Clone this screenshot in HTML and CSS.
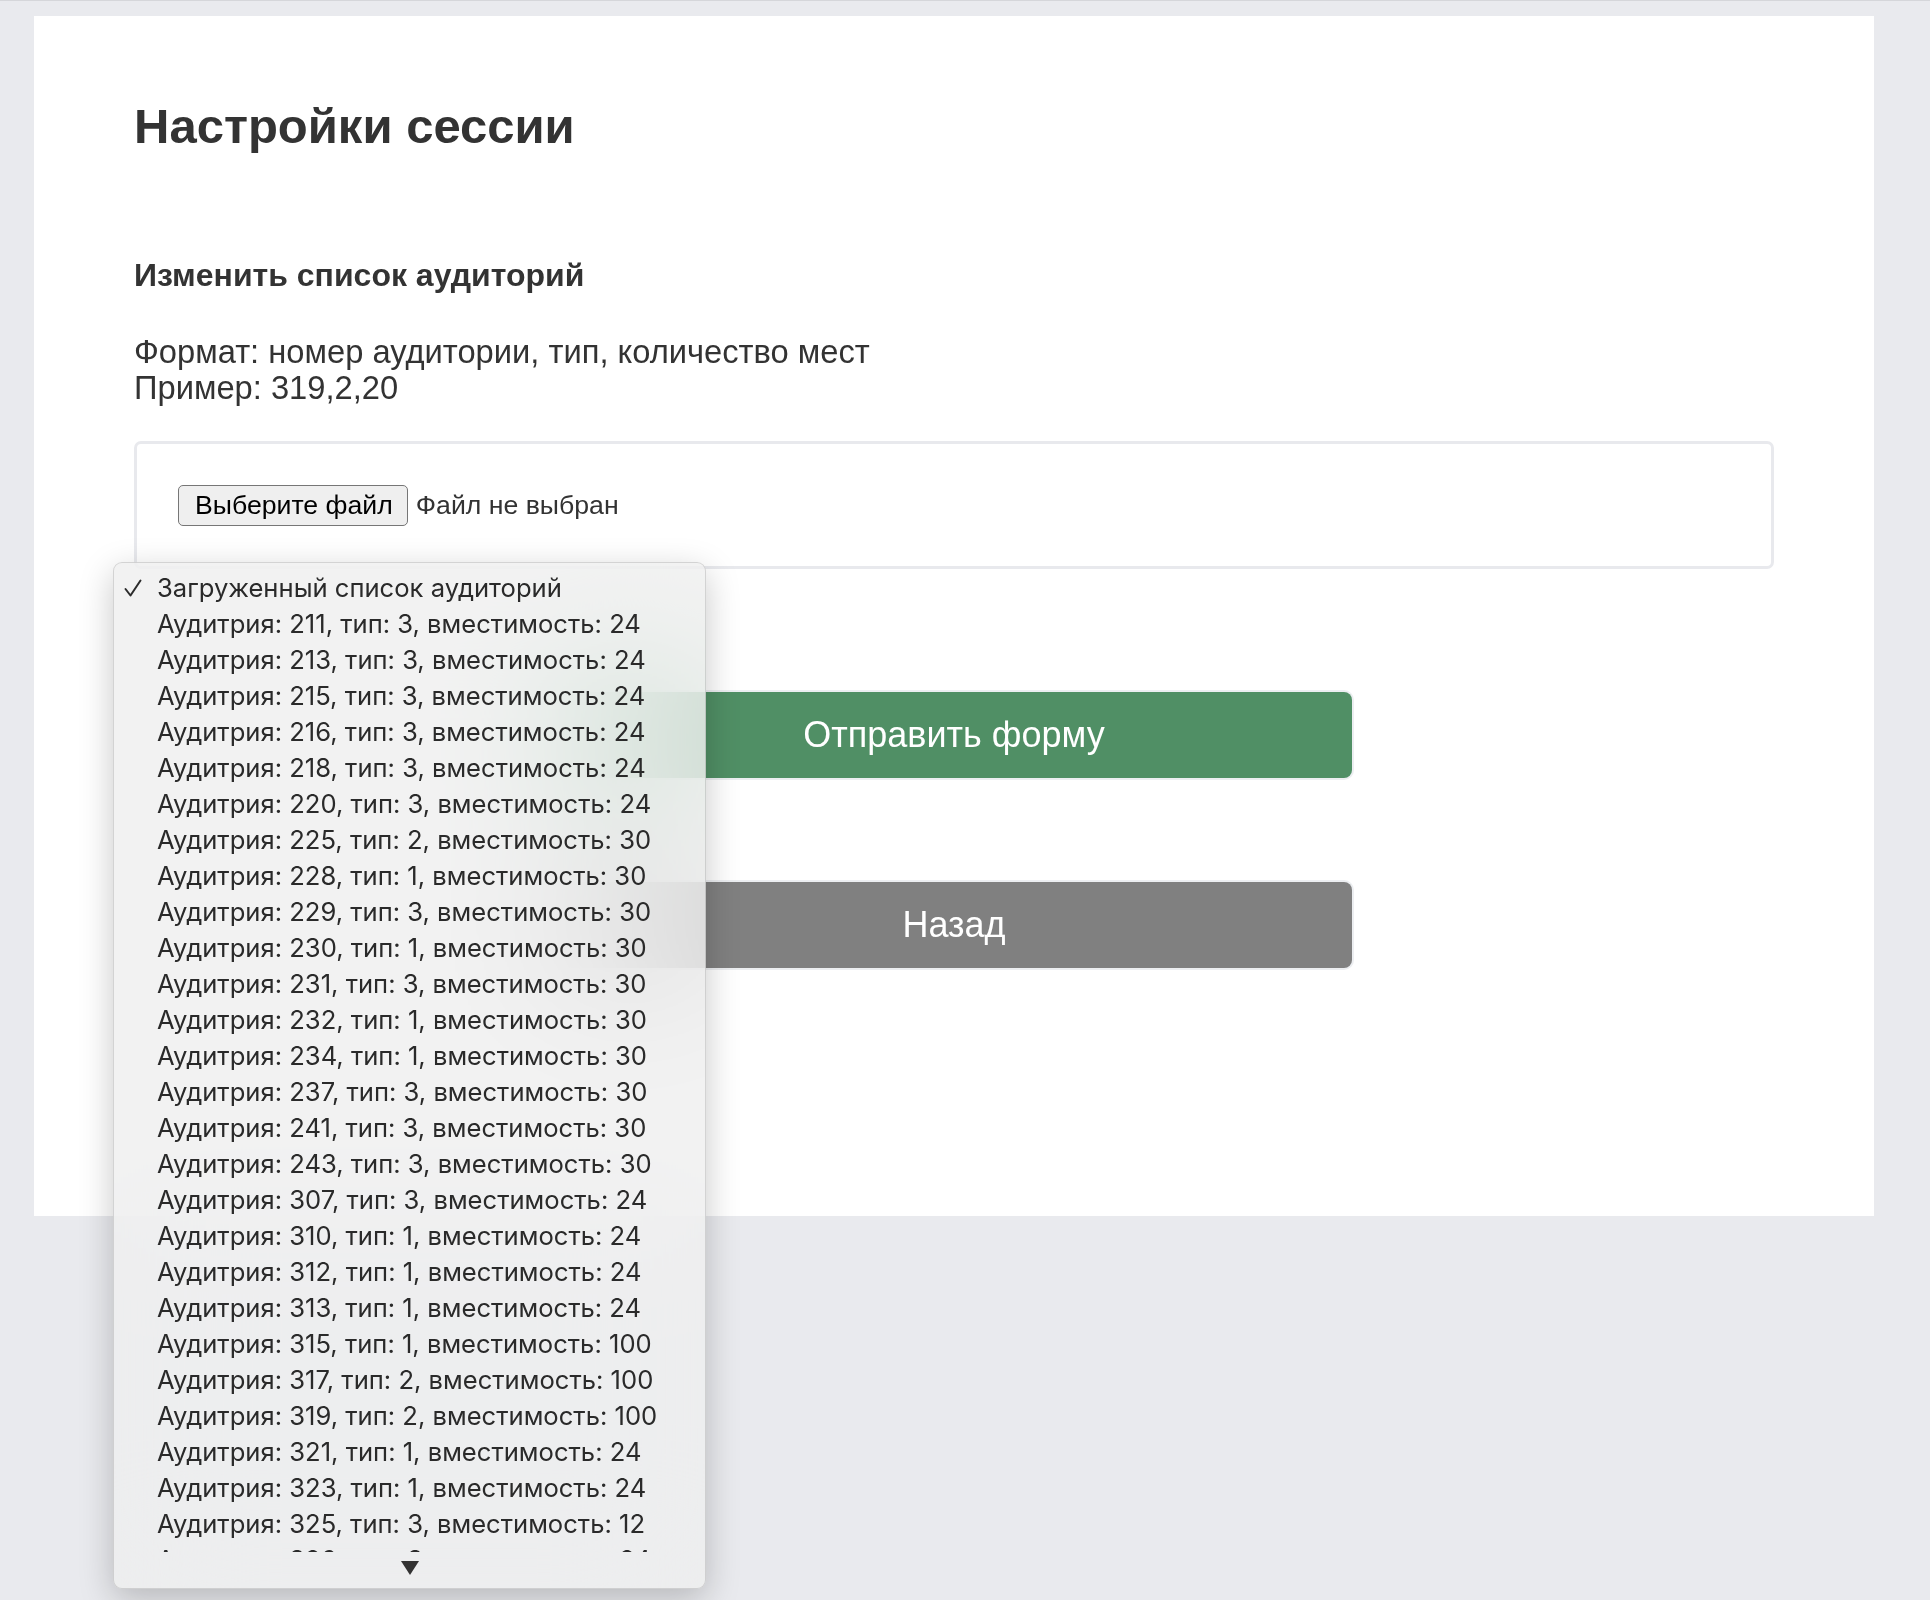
FILE: index.html
```html
<!DOCTYPE html>
<html lang="ru">
<head>
<meta charset="utf-8">
<title>Настройки сессии</title>
<link rel="stylesheet" href="styles.css">
</head>
<body>
<main class="card">
  <h1 class="title">Настройки сессии</h1>
  <h3 class="subtitle">Изменить список аудиторий</h3>
  <p class="hint">Формат: номер аудитории, тип, количество мест<br>Пример: 319,2,20</p>
  <div class="upload">
    <button type="button" class="file-btn">Выберите файл</button>
    <span class="file-name">Файл не выбран</span>
  </div>
  <div class="actions">
    <button type="button" class="btn btn-submit">Отправить форму</button>
    <button type="button" class="btn btn-back">Назад</button>
  </div>
</main>

<div class="popup">
  <ul class="popup-list">
    <li class="opt checked"><svg class="check" width="20" height="20" viewBox="0 0 20 20" aria-hidden="true"><path d="M2.5 11 L7.5 17.5 L17.5 2.5" fill="none" stroke="#2c2c2c" stroke-width="2" stroke-linecap="round" stroke-linejoin="round"/></svg>Загруженный список аудиторий</li>
    <li class="opt">Аудитрия: 211, тип: 3, вместимость: 24</li>
    <li class="opt">Аудитрия: 213, тип: 3, вместимость: 24</li>
    <li class="opt">Аудитрия: 215, тип: 3, вместимость: 24</li>
    <li class="opt">Аудитрия: 216, тип: 3, вместимость: 24</li>
    <li class="opt">Аудитрия: 218, тип: 3, вместимость: 24</li>
    <li class="opt">Аудитрия: 220, тип: 3, вместимость: 24</li>
    <li class="opt">Аудитрия: 225, тип: 2, вместимость: 30</li>
    <li class="opt">Аудитрия: 228, тип: 1, вместимость: 30</li>
    <li class="opt">Аудитрия: 229, тип: 3, вместимость: 30</li>
    <li class="opt">Аудитрия: 230, тип: 1, вместимость: 30</li>
    <li class="opt">Аудитрия: 231, тип: 3, вместимость: 30</li>
    <li class="opt">Аудитрия: 232, тип: 1, вместимость: 30</li>
    <li class="opt">Аудитрия: 234, тип: 1, вместимость: 30</li>
    <li class="opt">Аудитрия: 237, тип: 3, вместимость: 30</li>
    <li class="opt">Аудитрия: 241, тип: 3, вместимость: 30</li>
    <li class="opt">Аудитрия: 243, тип: 3, вместимость: 30</li>
    <li class="opt">Аудитрия: 307, тип: 3, вместимость: 24</li>
    <li class="opt">Аудитрия: 310, тип: 1, вместимость: 24</li>
    <li class="opt">Аудитрия: 312, тип: 1, вместимость: 24</li>
    <li class="opt">Аудитрия: 313, тип: 1, вместимость: 24</li>
    <li class="opt">Аудитрия: 315, тип: 1, вместимость: 100</li>
    <li class="opt">Аудитрия: 317, тип: 2, вместимость: 100</li>
    <li class="opt">Аудитрия: 319, тип: 2, вместимость: 100</li>
    <li class="opt">Аудитрия: 321, тип: 1, вместимость: 24</li>
    <li class="opt">Аудитрия: 323, тип: 1, вместимость: 24</li>
    <li class="opt">Аудитрия: 325, тип: 3, вместимость: 12</li>
    <li class="opt">Аудитрия: 326, тип: 3, вместимость: 24</li>
  </ul>
  <div class="popup-more">
    <svg width="20" height="16" viewBox="0 0 20 16" aria-hidden="true"><path d="M1 1 H19 L10 15 Z" fill="#333"/></svg>
  </div>
</div>
</body>
</html>
```

FILE: styles.css
```css
html, body {
  margin: 0;
  padding: 0;
}

body {
  background: #e9eaee;
  border-top: 1px solid #d5d6da;
  min-height: 1599px;
  font-family: "Liberation Sans", Arial, sans-serif;
  color: #333;
  position: relative;
}

.card {
  margin: 15px 56px 0 34px;
  background: #fff;
  padding: 82px 100px 248px;
}

.title {
  margin: 0;
  font-size: 49px;
  line-height: 56px;
  font-weight: bold;
  color: #333;
}

.subtitle {
  margin: 103px 0 0;
  font-size: 32px;
  line-height: 36px;
  font-weight: bold;
  color: #333;
}

.hint {
  margin: 41px 0 0;
  font-size: 32.7px;
  line-height: 36px;
  color: #333;
}

.upload {
  margin-top: 35px;
  border: 3px solid #e8e9ed;
  border-radius: 7px;
  padding: 41px 41px 40px;
  display: flex;
  align-items: center;
  gap: 8px;
}

.file-btn {
  height: 41px;
  box-sizing: border-box;
  padding: 0 14px 0 16px;
  font-family: "Liberation Sans", Arial, sans-serif;
  font-size: 26.67px;
  color: #000;
  background: #efefef;
  border: 1.5px solid #767676;
  border-radius: 5px;
}

.file-name {
  font-size: 26.67px;
  color: #333;
}

.actions {
  display: flex;
  flex-direction: column;
  align-items: center;
  gap: 104px;
  margin-top: 123px;
}

.btn {
  width: 796px;
  height: 86px;
  border: none;
  border-radius: 8px;
  box-shadow: 0 0 0 2px #eceef1;
  font-family: "Liberation Sans", Arial, sans-serif;
  font-size: 36px;
  color: #fff;
}

.btn-submit {
  background: #508f65;
}

.btn-back {
  background: #808080;
}

.popup {
  position: absolute;
  left: 113px;
  top: 561px;
  width: 593px;
  height: 1027px;
  box-sizing: border-box;
  border: 1px solid rgba(0, 0, 0, 0.13);
  border-radius: 9px;
  background: rgba(238, 238, 238, 0.78);
  backdrop-filter: blur(70px) saturate(1.5);
  box-shadow: 0 10px 34px rgba(0, 0, 0, 0.22);
  padding-top: 7px;
  display: flex;
  flex-direction: column;
  font-family: Inter, "Noto Sans", sans-serif;
}

.popup-list {
  list-style: none;
  margin: 0;
  padding: 0;
  height: 982px;
  overflow: hidden;
}

.opt {
  position: relative;
  height: 36px;
  line-height: 36px;
  padding-left: 43px;
  font-size: 25.6px;
  color: #2a2a2a;
  white-space: nowrap;
}

.check {
  position: absolute;
  left: 9px;
  top: 8px;
}

.popup-more {
  flex: 1;
  display: flex;
  align-items: center;
  justify-content: center;
  padding-bottom: 4px;
}
```
